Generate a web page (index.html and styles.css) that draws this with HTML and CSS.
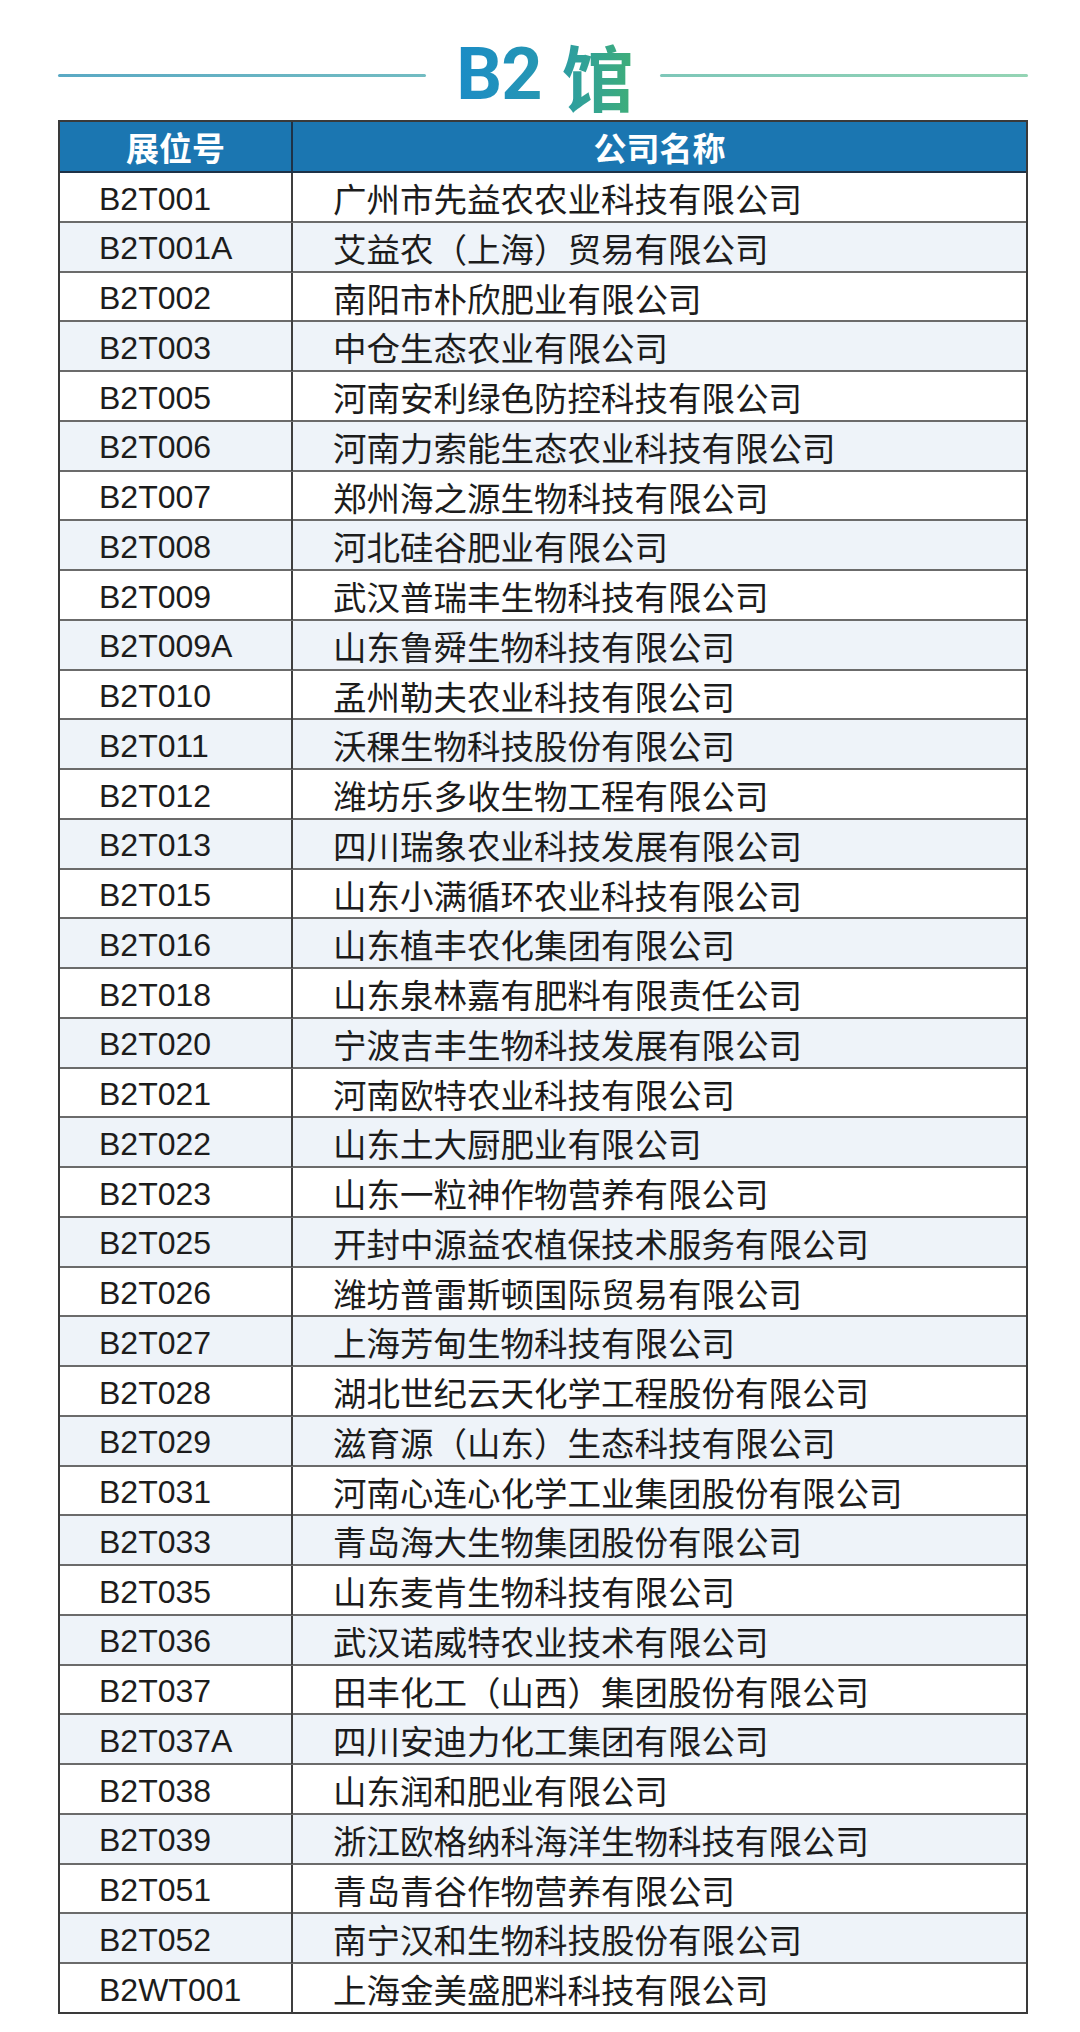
FILE: index.html
```html
<!DOCTYPE html>
<html lang="zh-CN">
<head>
<meta charset="utf-8">
<title>B2 馆</title>
<link rel="stylesheet" href="styles.css">
</head>
<body>
<div class="page">
  <div class="title-bar">
    <div class="line line-left"></div>
    <h1 class="title"><span class="title-latin">B2</span><span class="title-cjk">馆</span></h1>
    <div class="line line-right"></div>
  </div>
  <div class="table">
    <div class="row head"><div class="cell c1">展位号</div><div class="cell c2">公司名称</div></div>
    <div class="row"><div class="cell c1">B2T001</div><div class="cell c2">广州市先益农农业科技有限公司</div></div>
    <div class="row alt"><div class="cell c1">B2T001A</div><div class="cell c2">艾益农（上海）贸易有限公司</div></div>
    <div class="row"><div class="cell c1">B2T002</div><div class="cell c2">南阳市朴欣肥业有限公司</div></div>
    <div class="row alt"><div class="cell c1">B2T003</div><div class="cell c2">中仓生态农业有限公司</div></div>
    <div class="row"><div class="cell c1">B2T005</div><div class="cell c2">河南安利绿色防控科技有限公司</div></div>
    <div class="row alt"><div class="cell c1">B2T006</div><div class="cell c2">河南力索能生态农业科技有限公司</div></div>
    <div class="row"><div class="cell c1">B2T007</div><div class="cell c2">郑州海之源生物科技有限公司</div></div>
    <div class="row alt"><div class="cell c1">B2T008</div><div class="cell c2">河北硅谷肥业有限公司</div></div>
    <div class="row"><div class="cell c1">B2T009</div><div class="cell c2">武汉普瑞丰生物科技有限公司</div></div>
    <div class="row alt"><div class="cell c1">B2T009A</div><div class="cell c2">山东鲁舜生物科技有限公司</div></div>
    <div class="row"><div class="cell c1">B2T010</div><div class="cell c2">孟州勒夫农业科技有限公司</div></div>
    <div class="row alt"><div class="cell c1">B2T011</div><div class="cell c2">沃稞生物科技股份有限公司</div></div>
    <div class="row"><div class="cell c1">B2T012</div><div class="cell c2">潍坊乐多收生物工程有限公司</div></div>
    <div class="row alt"><div class="cell c1">B2T013</div><div class="cell c2">四川瑞象农业科技发展有限公司</div></div>
    <div class="row"><div class="cell c1">B2T015</div><div class="cell c2">山东小满循环农业科技有限公司</div></div>
    <div class="row alt"><div class="cell c1">B2T016</div><div class="cell c2">山东植丰农化集团有限公司</div></div>
    <div class="row"><div class="cell c1">B2T018</div><div class="cell c2">山东泉林嘉有肥料有限责任公司</div></div>
    <div class="row alt"><div class="cell c1">B2T020</div><div class="cell c2">宁波吉丰生物科技发展有限公司</div></div>
    <div class="row"><div class="cell c1">B2T021</div><div class="cell c2">河南欧特农业科技有限公司</div></div>
    <div class="row alt"><div class="cell c1">B2T022</div><div class="cell c2">山东土大厨肥业有限公司</div></div>
    <div class="row"><div class="cell c1">B2T023</div><div class="cell c2">山东一粒神作物营养有限公司</div></div>
    <div class="row alt"><div class="cell c1">B2T025</div><div class="cell c2">开封中源益农植保技术服务有限公司</div></div>
    <div class="row"><div class="cell c1">B2T026</div><div class="cell c2">潍坊普雷斯顿国际贸易有限公司</div></div>
    <div class="row alt"><div class="cell c1">B2T027</div><div class="cell c2">上海芳甸生物科技有限公司</div></div>
    <div class="row"><div class="cell c1">B2T028</div><div class="cell c2">湖北世纪云天化学工程股份有限公司</div></div>
    <div class="row alt"><div class="cell c1">B2T029</div><div class="cell c2">滋育源（山东）生态科技有限公司</div></div>
    <div class="row"><div class="cell c1">B2T031</div><div class="cell c2">河南心连心化学工业集团股份有限公司</div></div>
    <div class="row alt"><div class="cell c1">B2T033</div><div class="cell c2">青岛海大生物集团股份有限公司</div></div>
    <div class="row"><div class="cell c1">B2T035</div><div class="cell c2">山东麦肯生物科技有限公司</div></div>
    <div class="row alt"><div class="cell c1">B2T036</div><div class="cell c2">武汉诺威特农业技术有限公司</div></div>
    <div class="row"><div class="cell c1">B2T037</div><div class="cell c2">田丰化工（山西）集团股份有限公司</div></div>
    <div class="row alt"><div class="cell c1">B2T037A</div><div class="cell c2">四川安迪力化工集团有限公司</div></div>
    <div class="row"><div class="cell c1">B2T038</div><div class="cell c2">山东润和肥业有限公司</div></div>
    <div class="row alt"><div class="cell c1">B2T039</div><div class="cell c2">浙江欧格纳科海洋生物科技有限公司</div></div>
    <div class="row"><div class="cell c1">B2T051</div><div class="cell c2">青岛青谷作物营养有限公司</div></div>
    <div class="row alt"><div class="cell c1">B2T052</div><div class="cell c2">南宁汉和生物科技股份有限公司</div></div>
    <div class="row"><div class="cell c1">B2WT001</div><div class="cell c2">上海金美盛肥料科技有限公司</div></div>
  </div>
</div>
</body>
</html>
```

FILE: styles.css
```css
* { box-sizing: border-box; }
html, body { margin: 0; padding: 0; background: #ffffff; }
body { font-family: "Liberation Sans", "Noto Sans CJK SC", sans-serif; color: #1c1c1c; }

.page { width: 1080px; padding: 30px 52px 0 58px; }

.title-bar {
  display: flex;
  align-items: center;
  height: 90px;
}
.line { flex: 1; height: 3px; border-radius: 2px; }
.line-left { background: linear-gradient(90deg, #5aa9c4, #72bcc2); }
.line-right { background: linear-gradient(90deg, #7ec7b9, #94d4b4); }
.title {
  display: flex;
  align-items: center;
  gap: 20px;
  margin: 0 26px 0 30px;
  font-weight: 700;
  line-height: 90px;
  white-space: nowrap;
  background: linear-gradient(90deg, #1b8cc6 0%, #2596b4 45%, #3fae78 100%);
  -webkit-background-clip: text;
  background-clip: text;
  color: transparent;
}
.title-latin {
  font-family: "Roboto", "Liberation Sans", sans-serif;
  font-size: 72px;
  letter-spacing: -1px;
}
.title-cjk {
  font-family: "Noto Sans CJK SC", sans-serif;
  font-size: 72px;
}

.table {
  margin-top: 0;
  border: 2px solid #3a3a3a;
}
.row {
  display: grid;
  grid-template-columns: 233px 1fr;
  height: 49.75px;
  border-top: 2px solid #6b6b6b;
  background: #ffffff;
}
.row.alt { background: #eef3f9; }
.row.head {
  height: 49px;
  border-top: none;
  background: #1b76b1;
  color: #ffffff;
}
.row.head + .row { border-top: 2px solid #1e3247; }
.cell {
  display: flex;
  align-items: center;
  white-space: nowrap;
}
.c1 {
  border-right: 2px solid #3f3f3f;
  padding: 3px 0 0 39px;
  font-family: "Liberation Sans", "Noto Sans CJK SC", sans-serif;
  font-size: 32px;
}
.c2 {
  padding: 0 0 0 40px;
  font-family: "Noto Sans CJK SC", sans-serif;
  font-size: 33.5px;
}
.head .cell {
  justify-content: center;
  padding: 0;
  font-family: "Noto Sans CJK SC", sans-serif;
  font-weight: 700;
  font-size: 33px;
}
.head .c1 { border-right: 2px solid #1e3247; }
```
